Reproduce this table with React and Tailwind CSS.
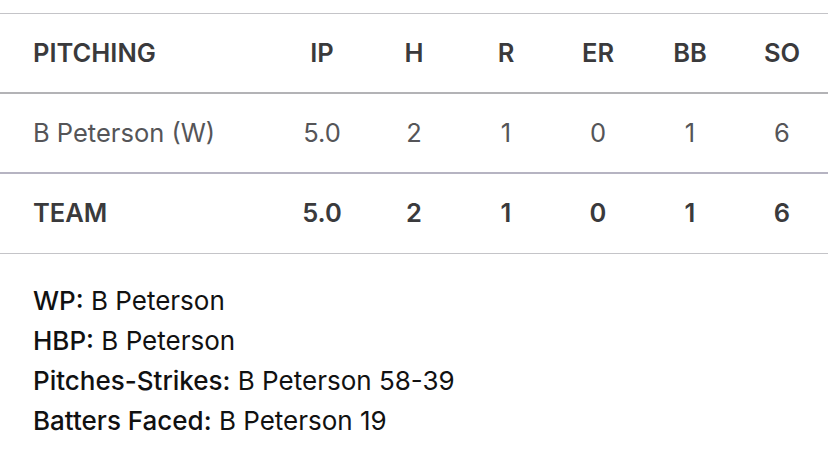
import React from "react";

const cols = ["IP", "H", "R", "ER", "BB", "SO"];
const pitcher = ["5.0", "2", "1", "0", "1", "6"];
const team = ["5.0", "2", "1", "0", "1", "6"];

const notes = [
  ["WP:", "B Peterson"],
  ["HBP:", "B Peterson"],
  ["Pitches-Strikes:", "B Peterson 58-39"],
  ["Batters Faced:", "B Peterson 19"],
];

function Row({ label, values, className, border }) {
  return (
    <div className={`grid grid-cols-[276px_repeat(6,1fr)] h-[80px] items-center ${border} ${className}`}>
      <div className="pl-[33px]">{label}</div>
      {values.map((v, i) => (
        <div key={i} className="text-center">
          {v}
        </div>
      ))}
    </div>
  );
}

export default function App() {
  return (
    <div className="w-[828px] h-[471px] bg-white font-['Inter','Liberation_Sans',sans-serif] text-[25.5px] overflow-hidden">
      <div className="h-[13px]" />
      {/* stats table */}
      <div className="border-t border-[#c4c4c8]">
        <Row
          label="PITCHING"
          values={cols}
          border="border-b-2 border-[#b3b3b6]"
          className="font-semibold text-[#3a3a3c]"
        />
        <Row
          label="B Peterson (W)"
          values={pitcher}
          border="border-b-2 border-[#b6b4c2]"
          className="text-[#555558]"
        />
        <Row
          label="TEAM"
          values={team}
          border="border-b border-[#c4c4c8]"
          className="font-semibold text-[#3a3a3c]"
        />
      </div>

      {/* notes */}
      <div className="pl-[33px] pt-[27px] flex flex-col text-[#111] text-[26px]">
        {notes.map(([k, v]) => (
          <div key={k} className="h-[40px] leading-[40px]">
            <span className="font-medium">{k}</span> {v}
          </div>
        ))}
      </div>
    </div>
  );
}
